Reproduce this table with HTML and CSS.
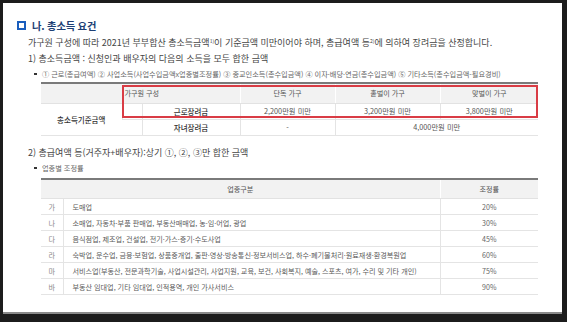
FILE: index.html
```html
<!DOCTYPE html>
<html lang="ko">
<head>
    <meta charset="UTF-8">
    <meta name="viewport" content="width=device-width, initial-scale=1.0">
    <title>총소득 요건</title>
    <link rel="stylesheet" href="styles.css">
</head>
<body>

    <div class="panel">
        <!-- 제목 -->
        <h2 class="title"><span class="title-icon"></span>나. 총소득 요건</h2>

        <div class="content">
            <p class="line">가구원 구성에 따라 2021년 부부합산 총소득금액<sup>1)</sup>이 기준금액 미만이어야 하며, 총급여액 등<sup>2)</sup>에 의하여 장려금을 산정합니다.</p>
            <p class="line">1) 총소득금액 : 신청인과 배우자의 다음의 소득을 모두 합한 금액</p>
            <p class="sub">① 근로(총급여액) ② 사업소득(사업수입금액x업종별조정률) ③ 종교인소득(총수입금액) ④ 이자·배당·연금(총수입금액) ⑤ 기타소득(총수입금액-필요경비)</p>

            <!-- 총소득기준금액 표 -->
            <div class="table-wrap">
                <table class="grid income">
                    <colgroup>
                        <col style="width: 81px">
                        <col style="width: 20px">
                        <col style="width: 98px">
                        <col style="width: 95px">
                        <col style="width: 105px">
                        <col style="width: 98px">
                    </colgroup>
                    <thead>
                        <tr>
                            <th></th>
                            <th colspan="2" class="left">가구원 구성</th>
                            <th>단독 가구</th>
                            <th>홑벌이 가구</th>
                            <th>맞벌이 가구</th>
                        </tr>
                    </thead>
                    <tbody>
                        <tr>
                            <td rowspan="2" class="label">총소득기준금액</td>
                            <td class="spacer"></td>
                            <td class="label">근로장려금</td>
                            <td>2,200만원 미만</td>
                            <td>3,200만원 미만</td>
                            <td>3,800만원 미만</td>
                        </tr>
                        <tr class="last">
                            <td class="spacer open"></td>
                            <td class="label">자녀장려금</td>
                            <td>-</td>
                            <td colspan="2">4,000만원 미만</td>
                        </tr>
                    </tbody>
                </table>
                <div class="highlight"></div>
            </div>

            <p class="line second">2) 총급여액 등(거주자+배우자):상기 ①, ②, ③만 합한 금액</p>
            <p class="sub">업종별 조정률</p>

            <!-- 업종별 조정률 표 -->
            <div class="table-wrap">
                <table class="grid rates">
                    <colgroup>
                        <col style="width: 22px">
                        <col style="width: 377px">
                        <col style="width: 98px">
                    </colgroup>
                    <thead>
                        <tr>
                            <th colspan="2">업종구분</th>
                            <th>조정률</th>
                        </tr>
                    </thead>
                    <tbody>
                        <tr><td class="mark">가</td><td class="left">도매업</td><td>20%</td></tr>
                        <tr><td class="mark">나</td><td class="left">소매업, 자동차·부품 판매업, 부동산매매업, 농·임·어업, 광업</td><td>30%</td></tr>
                        <tr><td class="mark">다</td><td class="left">음식점업, 제조업, 건설업, 전기·가스·증기·수도사업</td><td>45%</td></tr>
                        <tr><td class="mark">라</td><td class="left">숙박업, 운수업, 금융·보험업, 상품중개업, 출판·영상·방송통신·정보서비스업, 하수·폐기물처리·원료재생·환경복원업</td><td>60%</td></tr>
                        <tr><td class="mark">마</td><td class="left">서비스업(부동산, 전문과학기술, 사업시설관리, 사업지원, 교육, 보건, 사회복지, 예술, 스포츠, 여가, 수리 및 기타 개인)</td><td>75%</td></tr>
                        <tr><td class="mark">바</td><td class="left">부동산 임대업, 기타 임대업, 인적용역, 개인 가사서비스</td><td>90%</td></tr>
                    </tbody>
                </table>
            </div>
        </div>
    </div>

</body>
</html>
```

FILE: styles.css
```css
/* Reset */
* {
    margin: 0;
    padding: 0;
    box-sizing: border-box;
}

body {
    background-color: #1c1c1c;
    font-family: "Noto Sans CJK KR", "Noto Sans", sans-serif;
    color: #444;
}

/* 흰 화면 영역 */
.panel {
    margin: 3px 5px 0 3px;
    height: 311px;
    background-color: #fff;
    border-bottom: 2px solid #8a8a8a;
    padding: 15px 0 0 14px;
}

/* 제목 */
.title {
    display: flex;
    align-items: center;
    height: 14px;
    font-size: 10.3px;
    font-weight: 700;
    color: #1d3f75;
    letter-spacing: -0.2px;
}

.title-icon {
    width: 9px;
    height: 9px;
    border: 2.5px solid #1a5ebd;
    margin-right: 6px;
}

/* 본문 */
.content {
    padding-left: 11px;
    padding-top: 3px;
}

.line {
    font-size: 9px;
    line-height: 16px;
    color: #454545;
}

.line sup {
    font-size: 5px;
    vertical-align: 3px;
    line-height: 0;
}

.line.second {
    margin-top: 9px;
}

.sub {
    display: flex;
    align-items: center;
    font-size: 7.2px;
    line-height: 14px;
    color: #666;
    padding-left: 6px;
}

.sub::before {
    content: '';
    width: 3px;
    height: 2px;
    background-color: #333;
    margin-right: 5px;
    flex-shrink: 0;
}

/* 표 공통 */
.table-wrap {
    position: relative;
    margin-left: 13px;
    width: 497px;
}

.grid {
    width: 497px;
    table-layout: fixed;
    border-collapse: collapse;
    font-size: 7.1px;
    color: #666;
    border-top: 2px solid #7a7a7a;
}

.grid th {
    background-color: #f2f2f2;
    font-weight: 400;
    color: #555;
    height: 20px;
    text-align: center;
    border-left: 1px solid #fff;
    border-bottom: 1px solid #e2e2e2;
}

.grid th:first-child {
    border-left: none;
}

.grid td {
    text-align: center;
    border-left: 1px solid #e4e4e4;
    border-bottom: 1px solid #e4e4e4;
    white-space: nowrap;
}

.grid td:first-child {
    border-left: none;
}

.grid .left {
    text-align: left;
}

/* 총소득기준금액 표 */
.income {
    margin-top: 1px;
}

.income th.left {
    padding-left: 2px;
}

.income td {
    height: 16px;
    color: #555;
    font-size: 7.3px;
}

.income .label {
    color: #333;
    font-weight: 500;
    font-size: 7.5px;
}

.income .open {
    border-left: 1px solid #e4e4e4;
}

.highlight {
    position: absolute;
    left: 81px;
    top: 3px;
    width: 416px;
    height: 33px;
    border: 2px solid #d93c45;
}

/* 업종별 조정률 표 */
.rates {
    margin-top: 3px;
}

.rates td {
    height: 16px;
}

.rates td.left {
    padding-left: 9px;
    color: #5a5a5a;
}

.rates .mark {
    color: #888;
}
```
